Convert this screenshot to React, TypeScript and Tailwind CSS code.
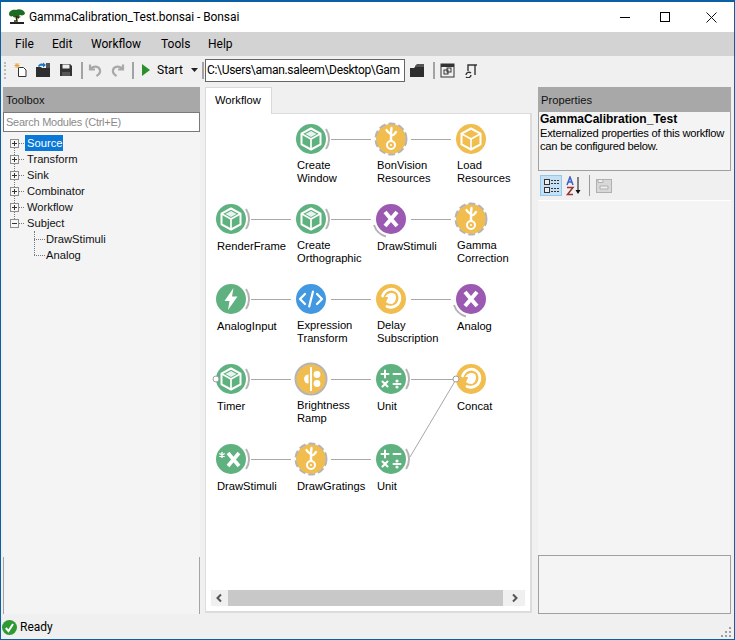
import type { ReactNode } from "react";

const GREEN = "#5fb27f";
const YELLOW = "#f0bd4e";
const PURPLE = "#9b59b2";
const BLUE = "#4299e1";
const RIM = "#b4b4b4";

type Deco = "source" | "dashed" | "ring" | "subject" | "none";

const Cube = ({ filled }: { filled?: boolean }) => (
  <g fill="none" stroke="#fff" strokeWidth="2" strokeLinejoin="round">
    <path d="M20 9.500l9.500 5.200v10.600L20 30.500l-9.500-5.200V14.700z" />
    <path d="M10.500 14.700L20 20l9.500-5.300M20 20v10.500" strokeWidth="1.700" />
    {filled && <path d="M20 12l5.500 2.900L20 17.900l-5.500-3z" fill="#fff" stroke="none" opacity="0.85" />}
  </g>
);

const Root = () => (
  <g fill="none" stroke="#fff" strokeWidth="2.400" strokeLinecap="round">
    <path d="M20 21v-5c0-2-3-2-4.500-5M20 16c0-2.500 0-4 .5-7M20 17c2-.5 3.500-1 5-4" />
    <circle cx="20" cy="26" r="4" strokeWidth="2" />
    <circle cx="20" cy="26" r="1" fill="#fff" stroke="none" />
  </g>
);

const Swirl = () => (
  <g fill="none" stroke="#fff" strokeLinecap="round">
    <path d="M11.500 17c2-6 9-9 14-5 4 3 4.500 9 1.500 13-3 3-7 4-11 2.500" strokeWidth="2.800" />
    <path d="M14 18c2-4 7-5 10-3 2 3 1 10-4 10-2 0-4-1-5-2 1-2 2-4 2-5z" fill="#fff" stroke="none" />
  </g>
);

const Bolt = () => <path d="M22.500 9L13.500 22h5l-1.500 9 9.500-13.500h-5.500z" fill="#fff" />;

const Code = () => (
  <g fill="none" stroke="#fff" strokeWidth="2.200" strokeLinecap="round" strokeLinejoin="round">
    <path d="M14 15l-5 5 5 5M26 15l5 5-5 5" />
    <path d="M22 12.500L18.200 27.500" />
  </g>
);

const Cross = () => (
  <path d="M14 13l12 14M26 13L14 27" fill="none" stroke="#fff" strokeWidth="4" />
);

const StarCross = () => (
  <g fill="none" stroke="#fff">
    <path d="M17 14l11 13M28 14L17 27" strokeWidth="3.600" />
    <path d="M11 13v6M8.300 14.500l5.400 3M13.700 14.500l-5.400 3" strokeWidth="1.400" />
  </g>
);

const Ramp = () => (
  <g fill="#fff">
    <rect x="19" y="8" width="2" height="24" />
    <path d="M17.500 15.500a4.500 4.500 0 1 0 0 9z" />
    <circle cx="26" cy="15.500" r="3.400" />
    <circle cx="26" cy="24.500" r="3.400" />
  </g>
);

const Maths = () => (
  <g fill="none" stroke="#fff" strokeWidth="2" strokeLinecap="round">
    <path d="M10.500 15h7M14 11.500v7M22.500 15h7M11.500 22.500l5 5M16.500 22.500l-5 5M22.500 25h7" />
    <circle cx="26" cy="22" r="0.600" fill="#fff" />
    <circle cx="26" cy="28" r="0.600" fill="#fff" />
  </g>
);

function Node({
  label,
  color,
  deco = "none",
  dot,
  children,
}: {
  label: string[];
  color: string;
  deco?: Deco;
  dot?: boolean;
  children: ReactNode;
}) {
  return (
    <div className="flex flex-col items-start">
      <svg width="40" height="40" viewBox="0 0 40 40" className="-ml-[6px] overflow-visible">
        <circle cx="20" cy="20" r="15" fill={color} />
        {deco === "source" && <path d="M35 10A18 18 0 0 1 35 30" fill="none" stroke={RIM} strokeWidth="2" />}
        {deco === "dashed" && (
          <circle cx="20" cy="20" r="15.500" fill="none" stroke={RIM} strokeWidth="2" strokeDasharray="7 3" />
        )}
        {deco === "ring" && <circle cx="20" cy="20" r="15.500" fill="none" stroke={RIM} strokeWidth="2" />}
        {deco === "subject" && <path d="M3 26A18 18 0 0 0 15 37.500" fill="none" stroke={RIM} strokeWidth="2" />}
        {children}
        {dot && <circle cx="5" cy="20" r="3" fill="#fff" stroke="#a0a0a0" />}
      </svg>
      <div className={label.length === 1 ? "pt-px text-[11.200px] leading-[13px] text-black whitespace-nowrap" : "text-[11.200px] leading-[13px] text-black whitespace-nowrap"}>
        {label.map((line) => (
          <div key={line}>{line}</div>
        ))}
      </div>
    </div>
  );
}

const Sep = () => <div className="w-[2px] h-[17px] bg-[#a3a3a3]" />;

function TreeRow({ label, open, active }: { label: string; open?: boolean; active?: boolean }) {
  return (
    <div className="h-4 flex items-center">
      <div className="w-[9px] h-[9px] border border-[#8e8e8e] bg-[#f7f7f7] relative z-10 flex items-center justify-center">
        <div className="absolute w-[5px] h-px bg-[#333]" />
        {!open && <div className="absolute w-px h-[5px] bg-[#333]" />}
      </div>
      <div className="w-[5px] border-t border-dotted border-[#777] mr-px" />
      <div
        className={
          active
            ? "bg-[#0a78d7] text-white h-4 leading-4 px-[2px] w-[38px]"
            : "h-4 leading-4 px-[2px] text-[#111]"
        }
      >
        {label}
      </div>
    </div>
  );
}

export default function App() {
  return (
    <div className="w-[735px] h-[640px] flex flex-col bg-[#f0f0f0] border-x border-b border-t-2 border-[#0b5fa5] font-['Roboto','Liberation_Sans',sans-serif] text-[12px] text-black overflow-hidden">
      {/* title bar */}
      <div className="h-[30px] bg-white flex items-center shrink-0">
        <svg width="18" height="18" viewBox="0 0 18 18" className="ml-[7px]">
          <path d="M1 6c0-3 4-5 7-4 3-2 8 0 9 3 0 2-3 3-5 2l-1 1 2 1c-2 1-4 1-5 0-2 1-3 0-3-1-2 1-4 0-4-2z" fill="#1f6b22" />
          <path d="M8 8l1 5H6M9 9l2 1" fill="none" stroke="#3a2a10" strokeWidth="1.500" />
          <rect x="2" y="14" width="14" height="2" fill="#222" />
        </svg>
        <div className="ml-[3px] tracking-[-0.08px]">GammaCalibration_Test.bonsai - Bonsai</div>
        <div className="ml-auto flex items-center">
          <div className="w-[10px] h-px bg-black" />
          <div className="w-[10px] h-[10px] border border-black ml-[30px]" />
          <svg width="11" height="11" viewBox="0 0 11 11" className="ml-[36px] mr-[17px]">
            <path d="M.5.5l10 10M10.500.5l-10 10" stroke="#111" fill="none" />
          </svg>
        </div>
      </div>

      {/* menu */}
      <div className="h-6 bg-[#d3d3d3] flex items-center pl-[14px] shrink-0">
        <span className="w-[37px]">File</span>
        <span className="w-[39px]">Edit</span>
        <span className="w-[70px]">Workflow</span>
        <span className="w-[47px]">Tools</span>
        <span>Help</span>
      </div>

      {/* toolbar */}
      <div className="h-7 flex items-center shrink-0">
        <div className="ml-[3px] w-[2px] h-[17px] border-l-2 border-dotted border-[#bbb]" />
        <svg width="16" height="16" viewBox="0 0 16 16" className="ml-[7px]">
          <path d="M5.500 5.500h5l2.500 2.500v6.500h-7.500z" fill="#fff" stroke="#333" />
          <path d="M4 1v5M1.500 3.500h5M2 1.500l4 4M6 1.500l-4 4" stroke="#e8a33c" />
        </svg>
        <svg width="16" height="16" viewBox="0 0 16 16" className="ml-[6px]">
          <path d="M1 5h5l1 1h8v9H1z" fill="#2e2e2e" />
          <path d="M3 4c1-2 3-3 5-2V.5l3 2.500-3 2.500V4C6 3.500 5 4 4 5z" fill="#1b75c4" />
          <path d="M11 1h4v5h-4z" fill="#555" />
        </svg>
        <svg width="14" height="14" viewBox="0 0 14 14" className="ml-[8px]">
          <path d="M1 1h10l2 2v10H1z" fill="#333" />
          <rect x="3.500" y="1.500" width="7" height="4" fill="#eee" />
          <rect x="3" y="9" width="8" height="4" fill="#555" />
        </svg>
        <div className="ml-[8px]"><Sep /></div>
        <svg width="14" height="14" viewBox="0 0 14 14" className="ml-[5px]">
          <path d="M2 1.500v5h5M2.500 6C5 2.500 11 3 12 7c.5 2.500-1 4.500-3.500 6" fill="none" stroke="#a8a8a8" strokeWidth="2.200" />
        </svg>
        <svg width="14" height="14" viewBox="0 0 14 14" className="ml-[9px]">
          <path d="M12 1.500v5H7M11.500 6C9 2.500 3 3 2 7c-.5 2.500 1 4.500 3.500 6" fill="none" stroke="#a8a8a8" strokeWidth="2.200" />
        </svg>
        <div className="ml-[7px]"><Sep /></div>
        <svg width="10" height="12" viewBox="0 0 10 12" className="ml-[7px]">
          <path d="M1 0l8 6-8 6z" fill="#2c8f2c" />
        </svg>
        <span className="ml-[6px] w-[29px]">Start</span>
        <svg width="7" height="4" viewBox="0 0 7 4" className="ml-[5px]">
          <path d="M0 0h7L3.500 4z" fill="#222" />
        </svg>
        <div className="ml-[4px]"><Sep /></div>
        <div className="ml-px w-[200px] h-[23px] border border-[#666] bg-white flex items-center pl-px overflow-hidden whitespace-nowrap tracking-[-0.3px]">
          {"C:\\Users\\aman.saleem\\Desktop\\Gam"}
        </div>
        <svg width="15" height="13" viewBox="0 0 15 13" className="ml-[5px]">
          <path d="M0 4h4l1-1h9v10H0z" fill="#2e2e2e" />
          <path d="M5 2l2-2h7v3H5z" fill="#555" />
        </svg>
        <div className="ml-[8px]"><Sep /></div>
        <svg width="15" height="15" viewBox="0 0 15 15" className="ml-[5px]">
          <rect x="1" y="1" width="13" height="13" fill="none" stroke="#333" />
          <path d="M1 1h13v3H1z" fill="#333" />
          <rect x="4" y="7" width="4" height="4" fill="none" stroke="#333" />
          <rect x="7" y="5" width="4" height="4" fill="none" stroke="#333" />
        </svg>
        <svg width="15" height="15" viewBox="0 0 15 15" className="ml-[8px]">
          <path d="M5 8V2h9M12 2v10" fill="none" stroke="#333" strokeWidth="1.400" />
          <path d="M3 12a3 3 0 0 1 5-2M8 12a3 3 0 0 1-5 2" fill="none" stroke="#333" strokeWidth="1.400" />
        </svg>
      </div>

      {/* body */}
      <div className="flex-1 flex pl-[2px] pr-[3px] pt-[3px] min-h-0 font-['Liberation_Sans',sans-serif] text-[11.200px]">
        {/* toolbox */}
        <div className="w-[197px] flex flex-col h-[527px] bg-[#f4f4f4] shrink-0">
          <div className="h-[25px] bg-[#a8a8a8] flex items-center pl-[3px] pt-px text-[#111]">Toolbox</div>
          <div className="h-5 border border-[#7a7a7a] bg-white text-[#8b8b8b] flex items-center pl-[2px] text-[11px] tracking-[-0.25px]">
            Search Modules (Ctrl+E)
          </div>
          <div className="relative pt-[3px] pl-[7px] flex-1">
            <div className="absolute left-[11px] top-[11px] h-20 border-l border-dotted border-[#777]" />
            <TreeRow label="Source" active />
            <TreeRow label="Transform" />
            <TreeRow label="Sink" />
            <TreeRow label="Combinator" />
            <TreeRow label="Workflow" />
            <TreeRow label="Subject" open />
            <div className="relative pl-[24px]">
              <div className="absolute left-[24px] top-0 h-6 w-3 border-l border-dotted border-[#777]" />
              {["DrawStimuli", "Analog"].map((name) => (
                <div key={name} className="h-4 flex items-center">
                  <div className="w-[11px] border-t border-dotted border-[#777] mr-px" />
                  <span className="text-[#111]">{name}</span>
                </div>
              ))}
            </div>
          </div>
          <div className="h-[57px] border-x border-[#a3a3a3]" />
        </div>

        {/* workflow */}
        <div className="ml-[5px] w-[327px] flex flex-col shrink-0 h-[526px]">
          <div className="h-[27px] w-[67px] bg-white border border-b-0 border-[#d9d9d9] flex items-center pl-[9px] pb-px relative z-10 -mb-px">
            Workflow
          </div>
          <div className="flex-1 bg-white border-2 border-t border-l border-[#dcdcdc] relative flex flex-col">
            <svg width="325" height="480" className="absolute left-0 top-0" fill="none" stroke="#a8a8a8">
              {/* links, coords relative to this panel */}
              <path d="M125 25.500h40M205 25.500h40" />
              <path d="M45 105.500h40M125 105.500h40M205 105.500h40" />
              <path d="M45 185.500h40M125 185.500h40M205 185.500h40" />
              <path d="M45 265.500h40M125 265.500h40M205 265.500h45" />
              <path d="M45 345.500h40M125 345.500h40" />
              <path d="M204 343L250 265.500" />
            </svg>
            <div className="relative flex-1 grid grid-cols-[repeat(4,80px)] auto-rows-[80px] pl-[11px] pt-[5px]">
              <div />
              <Node label={["Create", "Window"]} color={GREEN} deco="source"><Cube filled /></Node>
              <Node label={["BonVision", "Resources"]} color={YELLOW} deco="dashed"><Root /></Node>
              <Node label={["Load", "Resources"]} color={YELLOW}><Cube /></Node>

              <Node label={["RenderFrame"]} color={GREEN} deco="source"><Cube filled /></Node>
              <Node label={["Create", "Orthographic"]} color={GREEN} deco="source"><Cube filled /></Node>
              <Node label={["DrawStimuli"]} color={PURPLE} deco="subject"><Cross /></Node>
              <Node label={["Gamma", "Correction"]} color={YELLOW} deco="dashed"><Root /></Node>

              <Node label={["AnalogInput"]} color={GREEN} deco="source"><Bolt /></Node>
              <Node label={["Expression", "Transform"]} color={BLUE}><Code /></Node>
              <Node label={["Delay", "Subscription"]} color={YELLOW}><Swirl /></Node>
              <Node label={["Analog"]} color={PURPLE} deco="subject"><Cross /></Node>

              <Node label={["Timer"]} color={GREEN} deco="source" dot><Cube filled /></Node>
              <Node label={["Brightness", "Ramp"]} color={YELLOW} deco="ring"><Ramp /></Node>
              <Node label={["Unit"]} color={GREEN} deco="source"><Maths /></Node>
              <Node label={["Concat"]} color={YELLOW} dot><Swirl /></Node>

              <Node label={["DrawStimuli"]} color={GREEN} deco="source"><StarCross /></Node>
              <Node label={["DrawGratings"]} color={YELLOW} deco="dashed"><Root /></Node>
              <Node label={["Unit"]} color={GREEN} deco="source"><Maths /></Node>
            </div>
            {/* scrollbar */}
            <div className="h-4 mx-[5px] mb-[5px] bg-[#f0f0f0] flex items-center justify-between relative">
              <svg width="17" height="16" viewBox="0 0 17 16">
                <path d="M10 4.500L6.500 8l3.500 3.500" fill="none" stroke="#555" strokeWidth="2" />
              </svg>
              <div className="h-4 w-[275px] bg-[#c8c8c8]" />
              <svg width="22" height="16" viewBox="0 0 22 16">
                <path d="M10 4.500L13.500 8 10 11.500" fill="none" stroke="#555" strokeWidth="2" />
              </svg>
            </div>
          </div>
        </div>

        {/* properties */}
        <div className="ml-[6px] w-[193px] flex flex-col h-[527px] bg-[#f4f4f4] shrink-0">
          <div className="h-[25px] bg-[#a8a8a8] flex items-center pl-[3px] pt-px text-[#111]">Properties</div>
          <div className="h-[59px] border border-t-0 border-[#a0a0a0] pl-px pt-px leading-[13px] whitespace-nowrap">
            <div className="font-bold text-[12px]">GammaCalibration_Test</div>
            <div className="mt-px tracking-[-0.25px]">Externalized properties of this workflow</div>
            <div className="tracking-[-0.25px]">can be configured below.</div>
          </div>
          <div className="h-[29px] bg-[#f0f0f0] flex items-center pl-[2px]">
            <div className="w-[22px] h-[21px] bg-[#c5dff5] border border-[#90c8f0] flex items-center justify-center">
              <svg width="17" height="16" viewBox="0 0 17 16" fill="none" stroke="#333">
                <rect x="1.500" y="1.500" width="5" height="5" fill="#eee" />
                <rect x="1.500" y="9.500" width="5" height="5" fill="#eee" />
                <path d="M8 2.500h8M8 5.500h8M8 10.500h8M8 13.500h8" strokeDasharray="2 1" />
              </svg>
            </div>
            <div className="w-[22px] relative h-[20px] ml-[3px]">
              <svg width="20" height="20" viewBox="0 0 20 20">
                <path d="M2 9L5 1l3 8M3.500 6h3" fill="none" stroke="#3b5fc4" strokeWidth="1.500" />
                <path d="M2 11.500h6L2.500 18.500H8" fill="none" stroke="#a13030" strokeWidth="1.500" />
                <path d="M13 1v15" stroke="#111" />
                <path d="M10.500 14h5L13 18z" fill="#111" />
              </svg>
            </div>
            <div className="w-px h-[21px] bg-[#9a9a9a] ml-[2px]" />
            <svg width="16" height="15" viewBox="0 0 16 15" className="ml-[6px]">
              <rect x=".5" y="1.500" width="15" height="13" fill="#d8d8d8" stroke="#b0b0b0" />
              <path d="M2 1.500h5v3H2zM4 8h8v3H4z" fill="#eee" stroke="#b0b0b0" />
            </svg>
          </div>
          <div className="h-px bg-white" />
          <div className="flex-1" />
          <div className="h-[59px] border border-[#a0a0a0]" />
        </div>
      </div>

      {/* status bar */}
      <div className="h-[24px] flex items-center shrink-0 relative">
        <svg width="15" height="15" viewBox="0 0 15 15" className="ml-px">
          <circle cx="7.500" cy="7.500" r="7.500" fill="#2f9a33" />
          <path d="M3.800 8l2.700 3L11 4" fill="none" stroke="#fff" strokeWidth="2" />
        </svg>
        <span className="ml-[3px]">Ready</span>
        <svg width="11" height="11" viewBox="0 0 11 11" className="absolute right-[2px] bottom-[1px]" fill="#a0a0a0">
          <rect x="8" y="0" width="2" height="2" />
          <rect x="4" y="4" width="2" height="2" />
          <rect x="8" y="4" width="2" height="2" />
          <rect x="0" y="8" width="2" height="2" />
          <rect x="4" y="8" width="2" height="2" />
          <rect x="8" y="8" width="2" height="2" />
        </svg>
      </div>
    </div>
  );
}
